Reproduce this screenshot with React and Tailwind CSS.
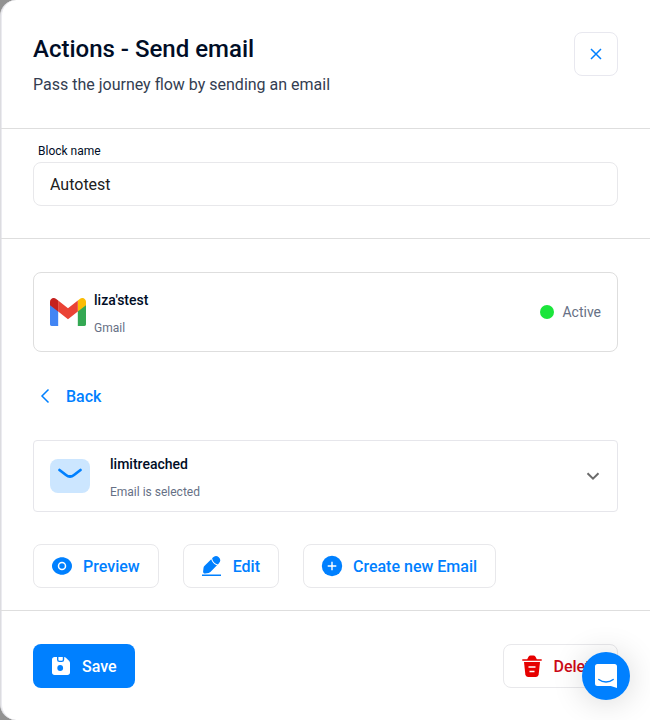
import { useState } from "react";

const outlineButton =
  "flex h-11 items-center gap-[9px] rounded-lg border border-[#e8e8eb] bg-white pr-[18px] pl-4 text-base font-medium whitespace-nowrap";

function CloseIcon() {
  return (
    <svg width="12" height="12" viewBox="0 0 12 12" fill="none" stroke="#0080ff" strokeWidth="1.5" aria-hidden="true">
      <path d="M1 1l10 10M11 1L1 11" />
    </svg>
  );
}

function GmailLogo() {
  return (
    <svg width="36" height="28" viewBox="52 42 88 66" preserveAspectRatio="none" aria-hidden="true">
      <path fill="#4285f4" d="M56 108h16V70L52 57v47c0 2.500 1.500 4 4 4" />
      <path fill="#34a853" d="M120 108h16c2.500 0 4-1.500 4-4V57l-20 13" />
      <path fill="#fbbc04" d="M120 48v26l20-15v-8c0-7.420-8.470-11.650-14.400-7.200" />
      <path fill="#ea4335" d="M72 74V48l24 18 24-18v26L96 92" />
      <path fill="#c5221f" d="M52 51v8l20 15V48l-5.600-4.200c-5.940-4.450-14.400-.22-14.400 7.200" />
    </svg>
  );
}

function BackIcon() {
  return (
    <svg width="24" height="24" viewBox="0 0 24 24" fill="none" stroke="#0080ff" strokeWidth="1.5" aria-hidden="true">
      <path d="M15.500 5.500L9 12l6.500 6.500" />
    </svg>
  );
}

function MailIcon() {
  return (
    <svg width="40" height="34" viewBox="0 0 40 34" fill="none" aria-hidden="true">
      <rect width="40" height="34" rx="8" fill="#cce6ff" />
      <path d="M9.500 11l6.500 5c2.500 1.900 5.500 1.900 8 0l6.500-5" stroke="#0080ff" strokeWidth="2.800" strokeLinecap="round" />
    </svg>
  );
}

function ChevronIcon() {
  return (
    <svg width="16" height="16" viewBox="0 0 16 16" fill="none" stroke="#6b6b6b" strokeWidth="2" aria-hidden="true">
      <path d="M2.500 5.200L8 10.700l5.500-5.500" />
    </svg>
  );
}

function EyeIcon() {
  return (
    <svg width="24" height="24" viewBox="0 0 24 24" fill="none" aria-hidden="true">
      <path d="M12 3.200c4.200 0 7.400 2.300 9.200 5.500 1.100 2.100 1.100 4.500 0 6.600-1.800 3.200-5 5.500-9.200 5.500s-7.400-2.300-9.200-5.500c-1.100-2.100-1.100-4.500 0-6.600C4.600 5.500 7.800 3.200 12 3.200z" fill="#0080ff" />
      <circle cx="12" cy="12" r="3.500" stroke="#fff" strokeWidth="1.500" />
    </svg>
  );
}

function PencilIcon() {
  return (
    <svg width="24" height="24" viewBox="0 0 24 24" fill="#0080ff" aria-hidden="true">
      <path d="M12.800 3.500c1.900-2 4.100-2 6-.2 2 1.900 2 4.100.1 6l-1 1.100c-2.900-.6-5.200-2.800-5.800-6z" />
      <path d="M11.200 5.300c.8 3 3 5.200 5.800 6l-6.600 6.800c-.5.500-1.100.8-1.700.9l-3.500.5c-1.400.1-2.200-.8-2.100-2.100l.4-3.500c.1-.7.400-1.300.9-1.800z" />
      <rect x="2" y="20.500" width="19" height="1.500" />
    </svg>
  );
}

function PlusIcon() {
  return (
    <svg width="24" height="24" viewBox="0 0 24 24" fill="none" aria-hidden="true">
      <circle cx="12" cy="12" r="10.200" fill="#0080ff" />
      <path d="M12 7.700v8.600M7.700 12h8.600" stroke="#fff" strokeWidth="1.400" />
    </svg>
  );
}

function SaveIcon() {
  return (
    <svg width="24" height="24" viewBox="0 0 24 24" aria-hidden="true">
      <path d="M5.500 3H15c.7 0 1.400.3 1.900.8l3.300 3.300c.5.500.8 1.200.8 1.900v9.500c0 1.400-1.100 2.500-2.500 2.500h-13C4.100 21 3 19.900 3 18.500v-13C3 4.100 4.100 3 5.500 3z" fill="#fff" />
      <path d="M8.700 2.500v3.200c0 1 .7 1.700 1.700 1.700h2.400c1 0 1.700-.7 1.700-1.700V2.500" stroke="#0080ff" strokeWidth="1.400" fill="none" />
      <circle cx="11.200" cy="14" r="2.900" fill="#0080ff" />
    </svg>
  );
}

function TrashIcon() {
  return (
    <svg width="24" height="24" viewBox="0 0 24 24" aria-hidden="true">
      <path d="M2.300 5.300h4.900l1.300-2.500c.5-.8 1.200-1.200 2.100-1.200h2.800c.9 0 1.600.4 2.100 1.200l1.300 2.500h4.900v1.500H2.300z" fill="#e60000" />
      <path d="M4 8h16l-1.300 12.300c-.2 1.600-1.300 2.600-3 2.600H8.300c-1.700 0-2.800-1-3-2.600z" fill="#e60000" />
      <path d="M8.500 13h7M9.500 17.500h5" stroke="#fff" strokeWidth="1.500" />
    </svg>
  );
}

function ChatIcon() {
  return (
    <svg width="22" height="24" viewBox="0 0 22 24" fill="none" aria-hidden="true">
      <path d="M2.500 0h17A2.500 2.500 0 0 1 22 2.500V24l-6.200-2H2.500A2.500 2.500 0 0 1 0 19.500v-17A2.500 2.500 0 0 1 2.500 0z" fill="#fff" />
      <path d="M3.800 15.500c4.200 3.300 10.200 3.300 14.400 0" stroke="#0080ff" strokeWidth="1.400" strokeLinecap="round" />
    </svg>
  );
}

export default function App() {
  const [name, setName] = useState("Autotest");

  return (
    <div className="min-h-screen bg-[#929292] font-[Roboto,'Liberation_Sans',sans-serif] text-[#000d26]">
      <main className="flex min-h-screen flex-col rounded-l-2xl border-l border-[#dcdce0] bg-white shadow-[inset_1px_0_0_#ebebf0]">
        <header className="flex items-start justify-between border-b border-[#dedede] px-8 pt-8 pb-[31px]">
          <div className="pt-px">
            <h1 className="text-2xl leading-8 font-medium">Actions - Send email</h1>
            <p className="mt-2 text-base leading-6 text-[#333d51]">Pass the journey flow by sending an email</p>
          </div>
          <button type="button" aria-label="Close" className="flex size-11 items-center justify-center rounded-lg border border-[#e8e8ef]">
            <CloseIcon />
          </button>
        </header>

        <section className="flex flex-col border-b border-[#dedede] px-8 pt-3 pb-8">
          <label htmlFor="block-name" className="ml-1 pt-0.5 pb-0.5 pl-px text-xs leading-[17px]">Block name</label>
          <input
            id="block-name"
            value={name}
            onChange={(event) => setName(event.target.value)}
            className="h-11 w-full rounded-lg border border-[#e8e8eb] px-4 text-base text-[#212121] outline-none"
          />
        </section>

        <section className="flex grow flex-col items-start px-8 pt-[33px] pb-[22px]">
          <div className="flex h-20 w-full items-center justify-between rounded-lg border border-[#dedede] px-4">
            <div className="flex items-center gap-2">
              <GmailLogo />
              <div className="pt-1">
                <h2 className="text-sm leading-5 font-medium">liza'stest</h2>
                <p className="mt-2 text-xs leading-5 text-[#667085]">Gmail</p>
              </div>
            </div>
            <div className="flex items-center gap-2">
              <span className="size-3.5 rounded-full bg-[#1be53b]" />
              <span className="text-sm text-[#667085]">Active</span>
            </div>
          </div>

          <button type="button" className="mt-[22px] flex h-11 items-center gap-[9px] text-base font-medium text-[#0080ff]">
            <BackIcon />
            <span className="pt-0.5">Back</span>
          </button>

          <button type="button" className="mt-[22px] flex h-[72px] w-full items-center justify-between rounded-sm border border-[#e6e6eb] px-4 text-left">
            <span className="flex items-center gap-5">
              <MailIcon />
              <span className="flex flex-col gap-2 pt-1">
                <span className="text-sm leading-5 font-medium">limitreached</span>
                <span className="text-xs leading-5 text-[#667085]">Email is selected</span>
              </span>
            </span>
            <ChevronIcon />
          </button>

          <div className="mt-8 flex gap-6">
            <button type="button" className={`${outlineButton} text-[#0080ff]`}>
              <EyeIcon />
              <span className="pt-0.5">Preview</span>
            </button>
            <button type="button" className={`${outlineButton} text-[#0080ff]`}>
              <PencilIcon />
              <span className="pt-0.5">Edit</span>
            </button>
            <button type="button" className={`${outlineButton} text-[#0080ff]`}>
              <PlusIcon />
              <span className="pt-0.5">Create new Email</span>
            </button>
          </div>
        </section>

        <footer className="flex items-center justify-between border-t border-[#dedede] px-8 pt-[33px] pb-8">
          <button type="button" className="flex h-11 items-center gap-[9px] rounded-lg bg-[#0080ff] pr-[18px] pl-4 text-base font-medium text-white">
            <SaveIcon />
            <span className="pt-0.5">Save</span>
          </button>
          <button type="button" className={`${outlineButton} text-[#cc0a17]`}>
            <TrashIcon />
            <span className="pt-0.5">Delete</span>
          </button>
        </footer>
      </main>

      <button
        type="button"
        aria-label="Open chat"
        className="fixed right-5 bottom-5 flex size-12 items-center justify-center rounded-full bg-[#0080ff] shadow-[0_2px_32px_rgba(0,0,0,0.16)]"
      >
        <ChatIcon />
      </button>
    </div>
  );
}
